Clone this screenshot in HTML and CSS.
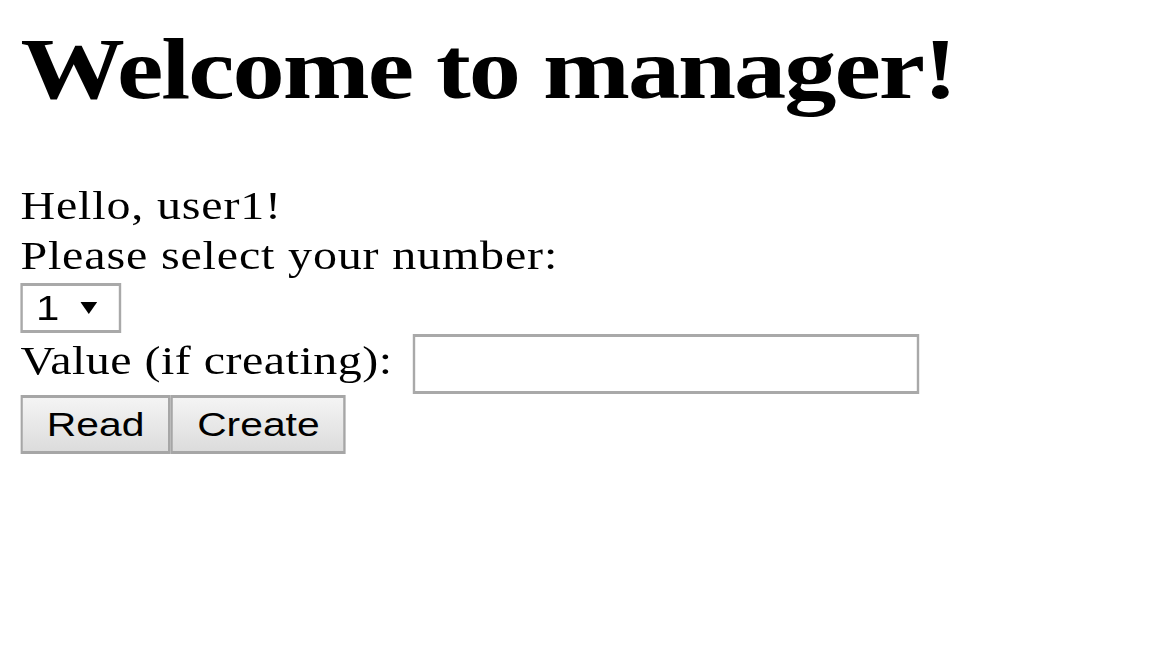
FILE: index.html
```html
<!DOCTYPE html>
<html lang="en">
<head>
<meta charset="utf-8">
<title>Manager</title>
<link rel="stylesheet" href="styles.css">
</head>
<body>
<div class="page">
  <h1 class="title">Welcome to manager!</h1>
  <form class="form">
    <p class="line">Hello, user1!</p>
    <p class="line">Please select your number:</p>
    <div class="select-row">
      <div class="select" role="listbox">
        <span class="sel-val">1</span>
        <svg class="sel-arrow" viewBox="0 0 14 14" aria-hidden="true"><polygon points="0,1 14,1 7,13"/></svg>
      </div>
    </div>
    <div class="value-row">
      <label class="line value-label" for="val">Value (if creating):</label>
      <input class="value-input" id="val" type="text">
    </div>
    <div class="buttons">
      <button class="btn" type="button">Read</button>
      <button class="btn" type="button">Create</button>
    </div>
  </form>
</div>
</body>
</html>
```
FILE: styles.css
```css
html, body {
  margin: 0;
  padding: 0;
  background: #fff;
}

.page {
  transform: scaleX(1.2);
  transform-origin: 0 0;
  padding: 19px 0 0 17px;
  width: 800px;
  font-family: "Liberation Serif", "Times New Roman", serif;
  color: #000;
}

.title {
  margin: 0 0 62px;
  font-size: 87px;
  font-weight: bold;
  line-height: 100px;
  letter-spacing: -1.7px;
  white-space: nowrap;
}

.form {
  margin: 0;
  display: flex;
  flex-direction: column;
  align-items: flex-start;
}

.line {
  margin: 0;
  font-size: 40px;
  line-height: 50px;
  letter-spacing: 0.7px;
  white-space: nowrap;
}

.select-row {
  margin-top: 1.5px;
}

.select {
  box-sizing: border-box;
  width: 84px;
  height: 50px;
  border: solid #a9a9a9;
  border-width: 3px 2px;
  display: flex;
  align-items: center;
  padding-left: 11px;
  background: #fff;
}

.sel-val {
  font-family: "Liberation Sans", Arial, sans-serif;
  font-size: 35px;
  line-height: 1;
}

.sel-arrow {
  width: 14px;
  height: 14px;
  margin-left: 18px;
  fill: #000;
}

.value-row {
  display: flex;
  align-items: flex-start;
  margin-top: 1px;
}

.value-label {
  flex: none;
  width: 327px;
  padding-top: 2px;
  letter-spacing: 0.4px;
}

.value-input {
  box-sizing: border-box;
  width: 422px;
  height: 60px;
  margin: 0;
  padding: 0 4px;
  border: solid #a9a9a9;
  border-width: 3px 2px;
  border-radius: 0;
  background: #fff;
  font-size: 35px;
  outline: none;
}

.buttons {
  display: flex;
  margin-top: 1px;
}

.btn {
  box-sizing: border-box;
  height: 59px;
  margin: 0;
  padding: 0 20px;
  border: solid #a6a6a6;
  border-width: 3px 2px;
  border-radius: 0;
  background: linear-gradient(#f4f4f4, #dcdcdc);
  font-family: "Liberation Sans", Arial, sans-serif;
  font-size: 34px;
  color: #000;
}
```
